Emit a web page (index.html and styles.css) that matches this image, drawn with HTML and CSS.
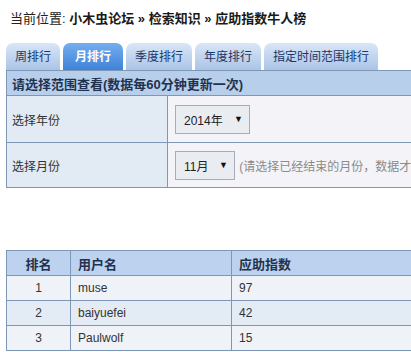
FILE: index.html
```html
<!DOCTYPE html>
<html lang="zh-CN">
<head>
    <meta charset="UTF-8">
    <meta name="viewport" content="width=device-width, initial-scale=1.0">
    <title>应助指数牛人榜</title>
    <link rel="stylesheet" href="styles.css">
</head>
<body>
    <div class="page">
        <!-- 当前位置 -->
        <div class="crumb">
            当前位置: <b>小木虫论坛 &raquo; 检索知识 &raquo; 应助指数牛人榜</b>
        </div>

        <!-- 排行切换 -->
        <ul class="tabs">
            <li class="tab">周排行</li>
            <li class="tab active">月排行</li>
            <li class="tab">季度排行</li>
            <li class="tab">年度排行</li>
            <li class="tab">指定时间范围排行</li>
        </ul>

        <!-- 范围选择 -->
        <table class="range">
            <tr>
                <th colspan="2">请选择范围查看(数据每60分钟更新一次)</th>
            </tr>
            <tr class="row-year">
                <td class="label">选择年份</td>
                <td class="value">
                    <div class="select-box year">2014年 <span class="arrow">&#9660;</span></div>
                </td>
            </tr>
            <tr class="row-month">
                <td class="label">选择月份</td>
                <td class="value">
                    <div class="select-box month">11月 <span class="arrow">&#9660;</span></div>
                    <span class="note">(请选择已经结束的月份，数据才</span>
                </td>
            </tr>
        </table>

        <!-- 排行结果 -->
        <table class="rank">
            <tr>
                <th class="col-no">排名</th>
                <th class="col-user">用户名</th>
                <th class="col-score">应助指数</th>
            </tr>
            <tr>
                <td class="col-no">1</td>
                <td>muse</td>
                <td>97</td>
            </tr>
            <tr class="alt">
                <td class="col-no">2</td>
                <td>baiyuefei</td>
                <td>42</td>
            </tr>
            <tr>
                <td class="col-no">3</td>
                <td>Paulwolf</td>
                <td>15</td>
            </tr>
        </table>
    </div>
</body>
</html>
```

FILE: styles.css
```css
html, body {
    margin: 0;
    overflow: hidden;
    background-color: #ffffff;
}

body {
    font-family: "Liberation Sans", "Noto Sans CJK SC", sans-serif;
    font-size: 12px;
    color: #333333;
}

.page {
    width: 760px;
    padding-left: 6px;
}

.crumb {
    padding: 10px 0 0 4px;
    line-height: 18px;
    font-size: 13px;
    color: #222222;
}

.crumb b {
    color: #1a1a1a;
}

.tabs {
    list-style: none;
    display: flex;
    gap: 3px;
    margin: 15px 0 0 0;
    padding: 0;
}

.tab {
    height: 27px;
    line-height: 29px;
    padding: 0 9px;
    border-radius: 7px 7px 0 0;
    background: linear-gradient(#d9e6f7, #aac4e6);
    color: #1a366a;
    font-size: 12px;
}

.tab.active {
    padding: 0 12px;
    background: linear-gradient(#74aef0, #3f82d8);
    color: #ffffff;
    font-weight: bold;
}

.range,
.rank {
    border-collapse: collapse;
    width: 720px;
}

.range th {
    height: 24px;
    padding: 0 0 0 5px;
    text-align: left;
    font-size: 13px;
    color: #1f3350;
    background-color: #b8cfec;
    border: 1px solid #7f97b6;
}

.range td {
    border: 1px solid #7f97b6;
    padding: 0;
}

.row-year td {
    height: 46px;
}

.row-month td {
    height: 44px;
}

.range .label {
    width: 155px;
    padding-left: 5px;
    background-color: #e2eaf4;
    color: #333333;
}

.range .value {
    padding-left: 7px;
    background-color: #f4f3f7;
}

.select-box {
    display: inline-flex;
    align-items: center;
    justify-content: space-between;
    box-sizing: border-box;
    height: 29px;
    padding: 0 6px 0 8px;
    border: 1px solid #a6adb8;
    background-color: #e9ecf1;
    color: #222222;
    vertical-align: middle;
}

.select-box.year {
    width: 75px;
}

.select-box.month {
    width: 60px;
}

.arrow {
    font-size: 9px;
    color: #111111;
}

.note {
    margin-left: 1px;
    color: #8a8a8a;
    vertical-align: middle;
    white-space: nowrap;
}

.rank {
    margin-top: 62px;
}

.rank th,
.rank td {
    height: 24px;
    padding: 0 0 0 7px;
    border: 1px solid #7f97b6;
    text-align: left;
}

.rank th {
    background-color: #bcd2ee;
    color: #1f3350;
    font-size: 13px;
}

.rank td {
    background-color: #eff2f7;
    color: #333333;
}

.rank .alt td {
    background-color: #e3ebf5;
}

.rank .col-no {
    width: 63px;
    padding: 0;
    text-align: center;
}

.rank .col-user {
    width: 153px;
}
```
